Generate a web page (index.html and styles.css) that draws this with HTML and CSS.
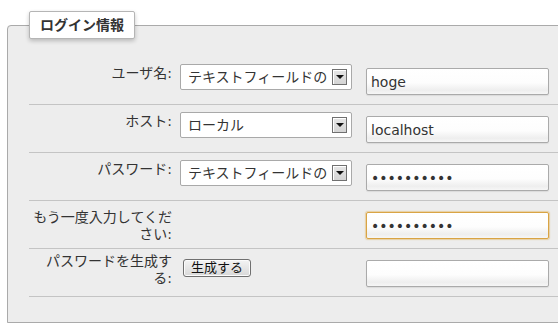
FILE: index.html
```html
<!DOCTYPE html>
<html lang="ja">
<head>
    <meta charset="UTF-8">
    <title>ログイン情報</title>
    <link rel="stylesheet" href="styles.css">
</head>
<body>
    <fieldset class="login-box">
        <legend>ログイン情報</legend>

        <div class="form-row">
            <label class="row-label">ユーザ名:</label>
            <div class="select-wrap">
                <select class="select-field">
                    <option>テキストフィールドの</option>
                </select>
                <span class="select-arrow"></span>
            </div>
            <input class="text-field" type="text" value="hoge">
        </div>

        <div class="form-row">
            <label class="row-label">ホスト:</label>
            <div class="select-wrap">
                <select class="select-field">
                    <option>ローカル</option>
                </select>
                <span class="select-arrow"></span>
            </div>
            <input class="text-field" type="text" value="localhost">
        </div>

        <div class="form-row">
            <label class="row-label">パスワード:</label>
            <div class="select-wrap">
                <select class="select-field">
                    <option>テキストフィールドの</option>
                </select>
                <span class="select-arrow"></span>
            </div>
            <input class="text-field" type="password" value="abcdefghij">
        </div>

        <div class="form-row">
            <label class="row-label">もう一度入力してください:</label>
            <div></div>
            <input class="text-field is-focused" type="password" value="abcdefghij">
        </div>

        <div class="form-row form-row-gen">
            <label class="row-label">パスワードを生成する:</label>
            <div>
                <button class="gen-button" type="button">生成する</button>
            </div>
            <input class="text-field" type="text" value="">
        </div>
    </fieldset>
</body>
</html>
```

FILE: styles.css
```css
* {
    box-sizing: border-box;
}

html, body {
    margin: 0;
    padding: 0;
    background: #fff;
    overflow: hidden;
}

body {
    font-family: "DejaVu Sans", "Noto Sans CJK JP", sans-serif;
    font-size: 14px;
    color: #333;
}

.login-box {
    margin: 11px 0 0 7px;
    width: 620px;
    min-width: 0;
    padding: 18px 0 25px 21px;
    border: 1px solid #aaa;
    border-radius: 4px 0 0 0;
    background: #ededed;
}

.login-box legend {
    padding: 5px 10px 4px;
    line-height: 17px;
    font-weight: bold;
    font-size: 14px;
    color: #333;
    background: #fff;
    border: 1px solid #b5b5b5;
    border-radius: 2px;
    box-shadow: 0 2px 4px rgba(0, 0, 0, 0.22);
}

.form-row {
    display: grid;
    grid-template-columns: 143px 178px 183px;
    column-gap: 8px;
    align-items: start;
    height: 48px;
    padding-top: 7px;
    border-bottom: 1px solid #c4c4c4;
}

.row-label {
    padding: 1px 0 0 1px;
    line-height: 17px;
    text-align: right;
}

.form-row-gen .row-label {
    margin-top: -4px;
}

.select-wrap {
    position: relative;
    width: 172px;
    height: 26px;
}

.select-field {
    appearance: none;
    -webkit-appearance: none;
    width: 100%;
    height: 26px;
    padding: 0 21px 0 7px;
    font: inherit;
    color: #333;
    background: #fff;
    border: 1px solid #a9a9a9;
    border-radius: 2px;
    outline: none;
}

.select-arrow {
    position: absolute;
    top: 5px;
    right: 5px;
    width: 15px;
    height: 16px;
    border: 1px solid #707070;
    background: linear-gradient(#e6e6e6, #d4d4d4);
    box-shadow: inset 1px 1px 0 #fff;
}

.select-arrow::after {
    content: "";
    position: absolute;
    left: 3px;
    top: 5px;
    border-left: 4px solid transparent;
    border-right: 4px solid transparent;
    border-top: 4px solid #111;
}

.text-field {
    width: 183px;
    height: 27px;
    margin-top: 4px;
    padding: 0 4px;
    font: inherit;
    color: #333;
    border: 1px solid #aaa;
    border-radius: 2px;
    background: linear-gradient(#fff 0%, #fdfdfd 55%, #eeeeee 85%, #f6f6f6 100%);
    box-shadow: 0 1px 1px rgba(0, 0, 0, 0.08);
    outline: none;
}

.text-field.is-focused {
    border-color: #d9a444;
    box-shadow: 0 0 1px 1px rgba(226, 178, 90, 0.5);
}

.gen-button {
    margin: 3px 0 0 3px;
    height: 18px;
    padding: 0 7px;
    font-family: "DejaVu Sans", "Noto Sans CJK JP", sans-serif;
    font-size: 13px;
    line-height: 14px;
    color: #111;
    border: 1px solid #707070;
    border-radius: 3px;
    background: linear-gradient(#f4f4f4, #e6e6e6 50%, #d8d8d8);
    box-shadow: inset 0 0 0 1px #fbfbfb;
}
```
